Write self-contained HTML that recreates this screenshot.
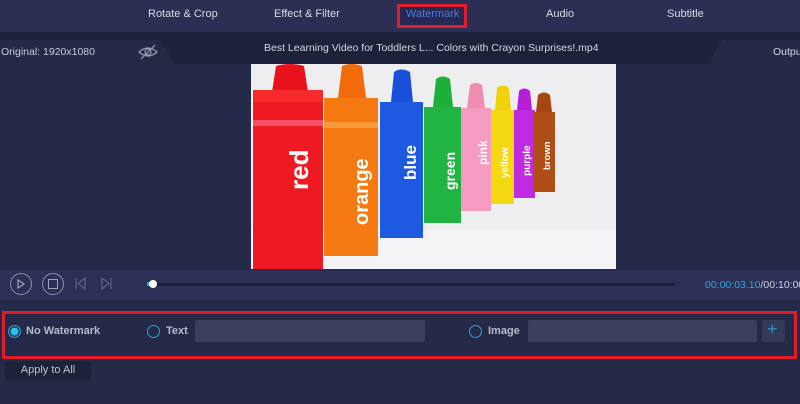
<!DOCTYPE html>
<html><head><meta charset="utf-8"><style>
body{margin:0;width:800px;height:404px;overflow:hidden;background:#262a49;font-family:"Liberation Sans",sans-serif;position:relative}
.a{position:absolute}
.top{left:0;top:0;width:800px;height:32px;background:#2b2f53}
.tab{top:8px;font-size:11px;color:#d8dae6}
.row2{left:0;top:32px;width:800px;height:32px;background:#1d2139}
.ctrl{left:0;top:270px;width:800px;height:30px;background:#2c3056}
.circ{width:20px;height:20px;border:1px solid #8d90aa;border-radius:50%;top:273px}
.lbl{font-size:11px;font-weight:bold;color:#b8bacb}
.radio{width:11px;height:11px;border:1.5px solid #2aa3d6;border-radius:50%}
.inp{background:#3c3f5e;border-radius:2px;height:22px;top:320px}
</style></head><body>
<div class="a top"></div>
<div class="a tab" style="left:148px">Rotate &amp; Crop</div>
<div class="a tab" style="left:274px">Effect &amp; Filter</div>
<div class="a" style="left:397px;top:4px;width:70px;height:24px;box-sizing:border-box;border:3px solid #e0202e;background:#262a52"></div>
<div class="a tab" style="left:406px;color:#4d78e0">Watermark</div>
<div class="a tab" style="left:546px">Audio</div>
<div class="a tab" style="left:667px">Subtitle</div>
<div class="a row2"></div>
<svg class="a" style="left:0;top:32px" width="800" height="32"><polygon points="0,8 160,8 175,32 0,32" fill="#252946"/><polygon points="722,8 800,8 800,32 708,32" fill="#252946"/></svg>
<div class="a" style="left:1px;top:46px;font-size:10.5px;color:#c9cbd8">Original: 1920x1080</div>
<svg class="a" style="left:137px;top:44px" width="22" height="16"><path d="M2 8 Q11 0 20 8 Q11 16 2 8Z" fill="none" stroke="#9a9cb3" stroke-width="1.2"/><circle cx="11" cy="8" r="3" fill="none" stroke="#9a9cb3" stroke-width="1.2"/><line x1="4" y1="15" x2="18" y2="1" stroke="#9a9cb3" stroke-width="1.2"/></svg>
<div class="a" style="left:264px;top:42px;font-size:10.5px;color:#d6d8e3">Best Learning Video for Toddlers L... Colors with Crayon Surprises!.mp4</div>
<div class="a" style="left:773px;top:46px;font-size:10.5px;color:#d6d8e3">Output</div>
<svg class="a" style="left:251px;top:64px" width="365" height="205" viewBox="251 64 365 205">
<rect x="251" y="64" width="365" height="205" fill="#eeeef0"/>
<rect x="251" y="230" width="365" height="39" fill="#f4f4f6"/>
<g font-family="Liberation Sans" font-weight="bold" fill="#fff">
<path d="M272 92 L276 66 Q290 62 304 66 L308 92Z" fill="#e8121c"/><rect x="253" y="90" width="70" height="179" fill="#ee1a22"/><rect x="253" y="90" width="70" height="12" fill="#f52a2a"/><rect x="253" y="120" width="70" height="6" fill="#f5506a"/>
<text transform="translate(308,190) rotate(-90)" font-size="26">red</text>
<path d="M338 98 L342 66 Q351 62 362 66 L366 98Z" fill="#f36a0a"/><rect x="324" y="98" width="54" height="158" fill="#f57a12"/><rect x="324" y="122" width="54" height="6" fill="#f89a3a"/>
<text transform="translate(368,225) rotate(-90)" font-size="20">orange</text>
<path d="M391 102 L394 72 Q401 67 410 72 L413 102Z" fill="#1a4fd8"/><rect x="380" y="102" width="43" height="136" fill="#1e5ae0"/>
<text transform="translate(416,180) rotate(-90)" font-size="17">blue</text>
<path d="M433 107 L436 79 Q443 74 450 79 L453 107Z" fill="#1caf3a"/><rect x="424" y="107" width="37" height="116" fill="#22b443"/>
<text transform="translate(455,190) rotate(-90)" font-size="14">green</text>
<path d="M467 108 L470 85 Q476 81 482 85 L485 108Z" fill="#f08cb0"/><rect x="461" y="108" width="30" height="103" fill="#f59ac0"/>
<text transform="translate(487,165) rotate(-90)" font-size="12">pink</text>
<path d="M495 110 L497 88 Q503 83 509 88 L511 110Z" fill="#f0d20a"/><rect x="491" y="110" width="23" height="94" fill="#f4d812"/>
<text transform="translate(508,178) rotate(-90)" font-size="10">yellow</text>
<path d="M517 110 L519 91 Q524 86 530 91 L532 110Z" fill="#b61ed8"/><rect x="514" y="110" width="21" height="88" fill="#c02ae0"/>
<text transform="translate(530,176) rotate(-90)" font-size="10">purple</text>
<path d="M536 112 L538 95 Q544 90 550 95 L552 112Z" fill="#a84612"/><rect x="533" y="112" width="22" height="80" fill="#b04e18"/>
<text transform="translate(550,170) rotate(-90)" font-size="9.5">brown</text>
</g></svg>
<div class="a ctrl"></div>
<div class="a circ" style="left:10px"></div>
<svg class="a" style="left:16px;top:279px" width="10" height="10"><path d="M2 1 L8 5 L2 9Z" fill="none" stroke="#9fa2bb" stroke-width="1.2"/></svg>
<div class="a circ" style="left:42px"></div>
<div class="a" style="left:48px;top:279px;width:8px;height:8px;border:1.2px solid #9fa2bb"></div>
<svg class="a" style="left:74px;top:277px" width="44" height="14"><path d="M2 1 V12 M11 1 L4 6.5 L11 12Z" fill="none" stroke="#6a6d8a" stroke-width="1"/><path d="M28 1 L35 6.5 L28 12Z M37 1 V12" fill="none" stroke="#6a6d8a" stroke-width="1"/></svg>
<div class="a" style="left:148px;top:283px;width:527px;height:3px;background:#1b1f38"></div>
<div class="a" style="left:147px;top:282px;width:6px;height:4px;background:#2aa3d6"></div>
<div class="a" style="left:149px;top:280px;width:8px;height:8px;border-radius:50%;background:#fff"></div>
<div class="a" style="left:705px;top:279px;font-size:10.5px;color:#d0d2de;white-space:nowrap"><span style="color:#2ea6e0">00:00:03.10</span>/00:10:00</div>
<div class="a" style="left:2px;top:311px;width:795px;height:48px;box-sizing:border-box;border:3px solid #e21c2b"></div>
<div class="a radio" style="left:8px;top:325px;background:#27c3f0;box-shadow:inset 0 0 0 1.5px #262a49"></div>
<div class="a lbl" style="left:26px;top:325px">No Watermark</div>
<div class="a radio" style="left:147px;top:325px"></div>
<div class="a lbl" style="left:166px;top:325px">Text</div>
<div class="a inp" style="left:195px;width:230px"></div>
<div class="a radio" style="left:469px;top:325px"></div>
<div class="a lbl" style="left:488px;top:325px">Image</div>
<div class="a inp" style="left:528px;width:229px"></div>
<div class="a inp" style="left:762px;width:23px;background:#363a5a"></div>
<div class="a" style="left:767px;top:319px;font-size:18px;color:#2a8fc0">+</div>
<div class="a" style="left:5px;top:361px;width:86px;height:20px;background:#1d2139;border-radius:2px;color:#c0c2d2;font-size:11px;text-align:center;line-height:19px">Apply to All</div>
</body></html>
